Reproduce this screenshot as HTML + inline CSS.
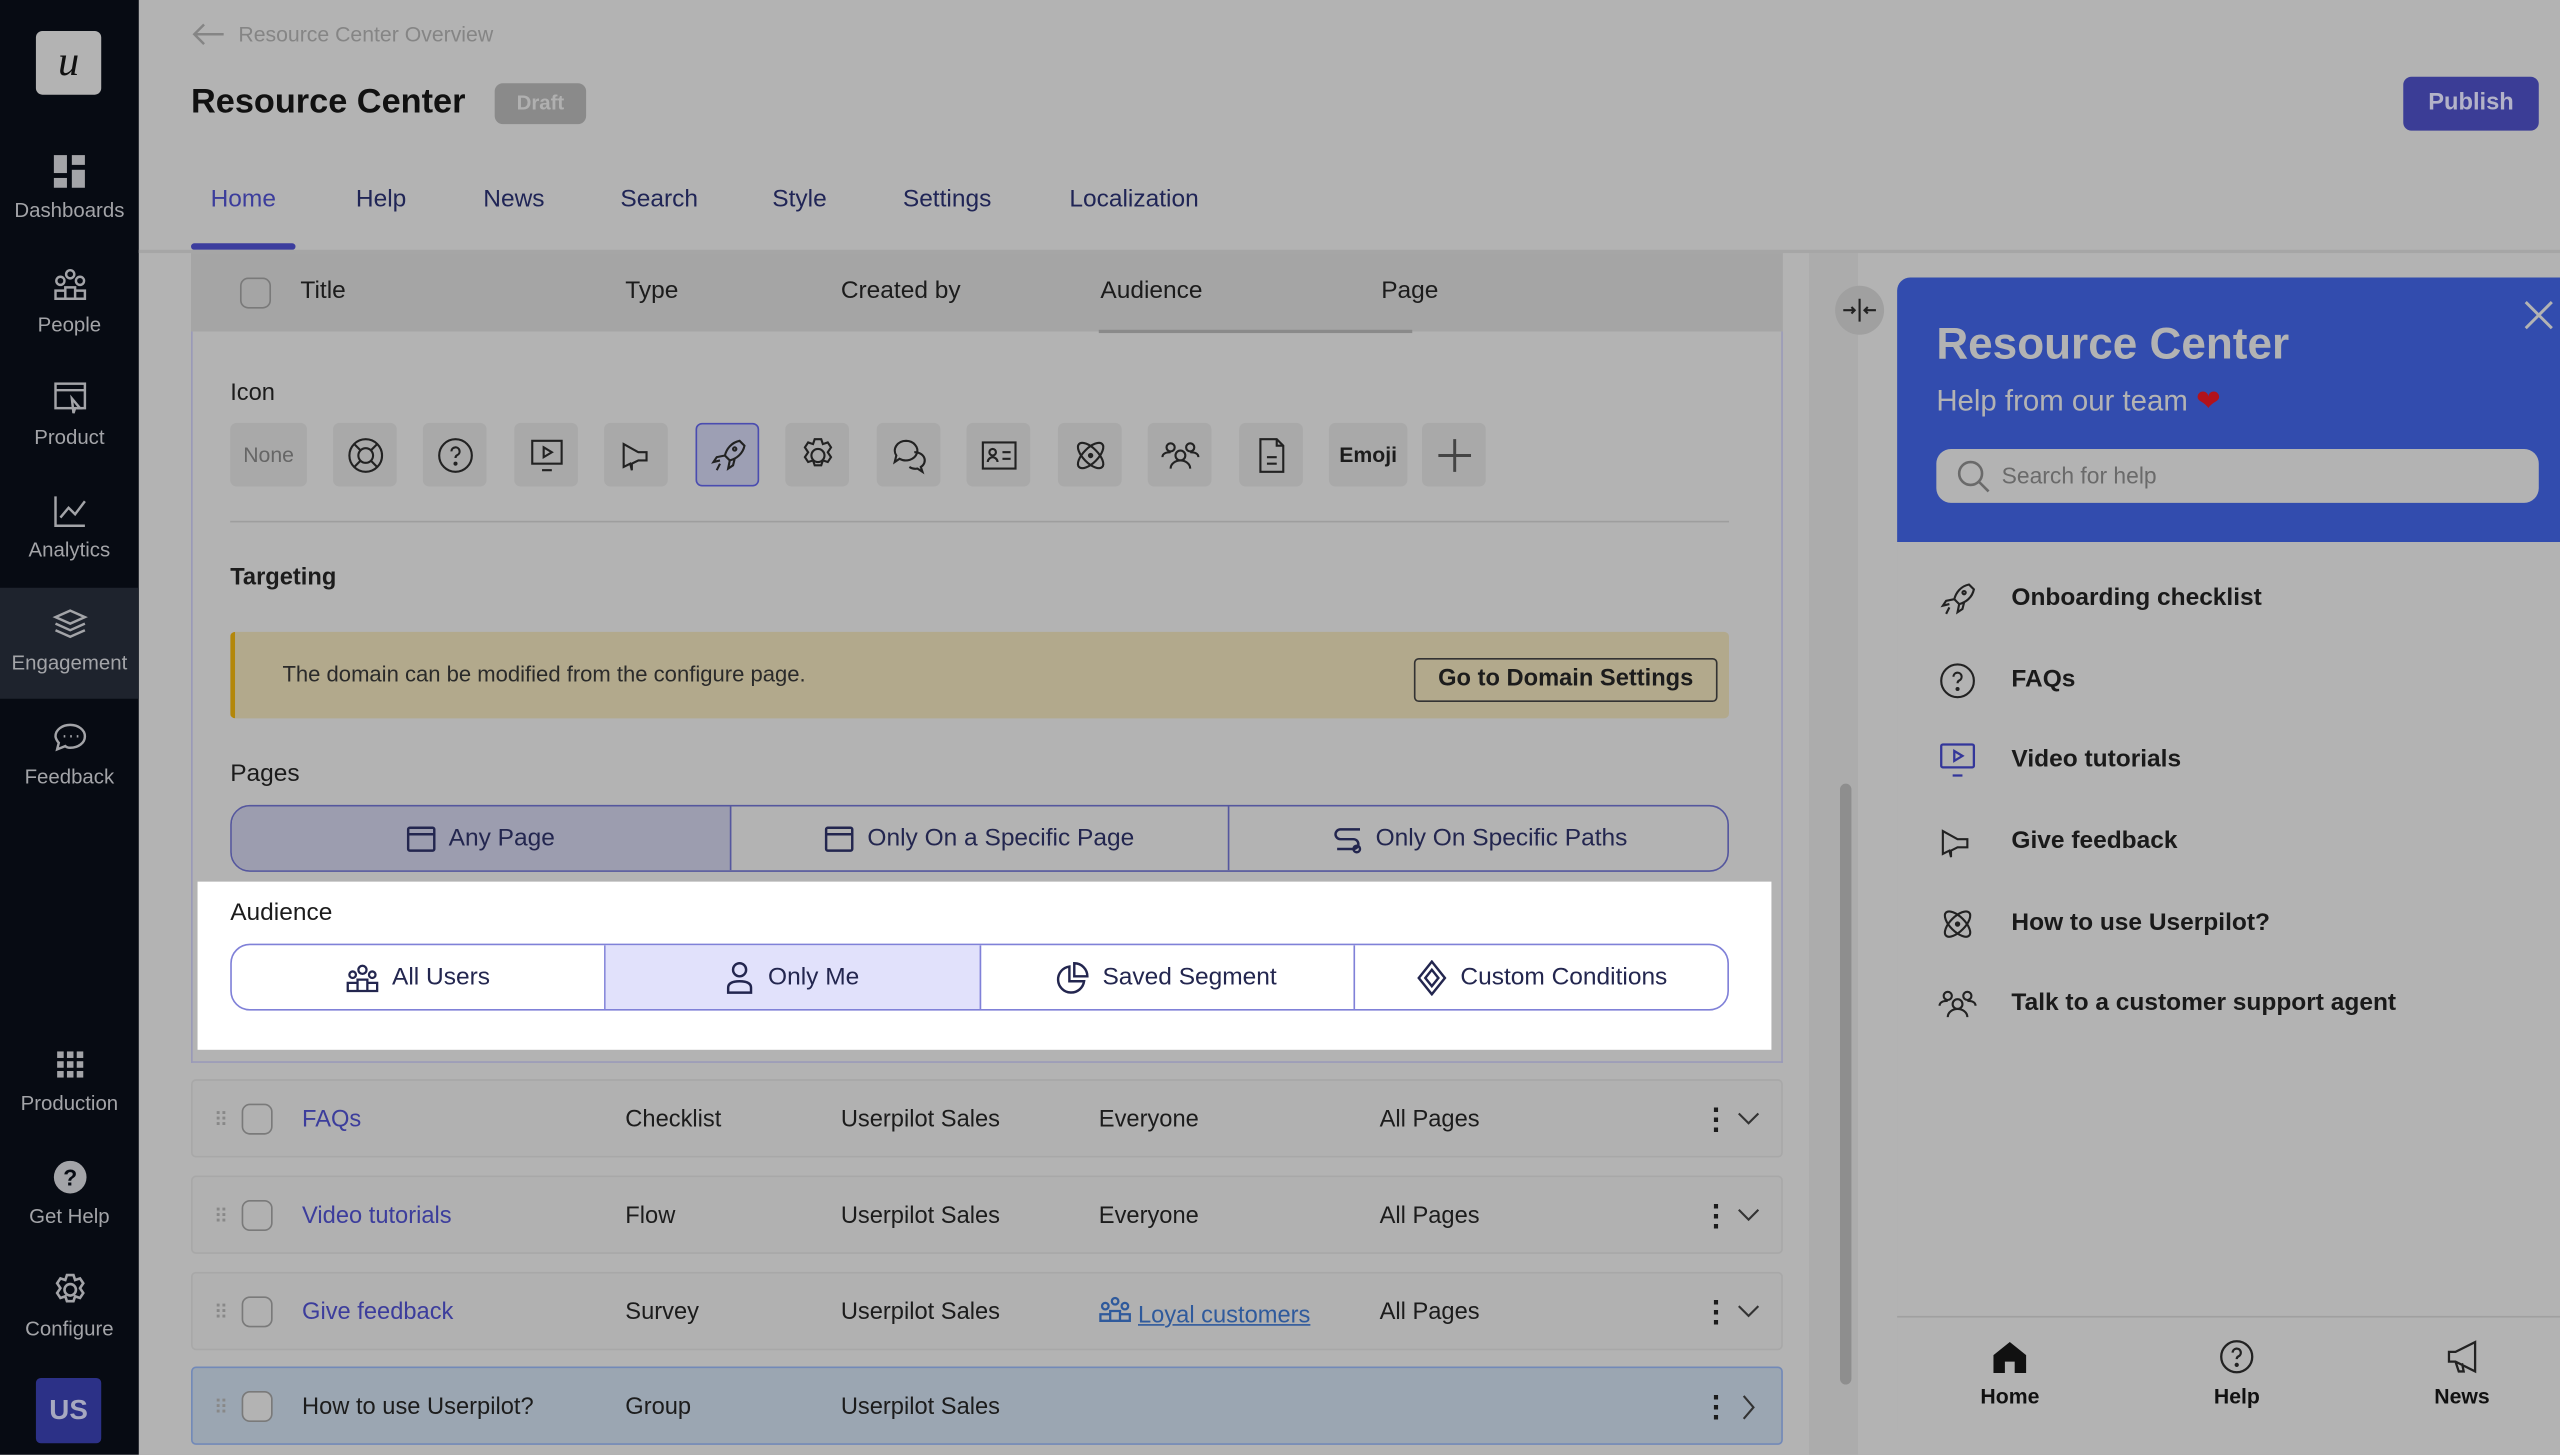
<!DOCTYPE html>
<html><head><meta charset="utf-8"><style>
*{box-sizing:border-box;margin:0;padding:0}
html,body{width:2560px;height:1455px;overflow:hidden;background:#b3b3b3}
#w{position:absolute;left:0;top:0;width:1568px;height:891px;transform:scale(1.632653);transform-origin:0 0;font-family:"Liberation Sans",sans-serif;color:#1c1c1c;background:#b3b3b3}
.a{position:absolute}
.sb{left:0;top:0;width:85px;height:891px;background:#070b13}
.ni{position:absolute;left:0;width:85px;text-align:center;color:#a3a4a8;font-size:12.5px}
.ni svg{display:block;margin:0 auto 6px}
.t{position:absolute;white-space:nowrap;transform:translateY(-50%)}
.ib{position:absolute;top:259px;width:39px;height:39px;background:#a9a9a9;border-radius:4px;display:flex;align-items:center;justify-content:center}
.seg{position:absolute;display:flex;border-radius:12px;overflow:hidden}
.seg div{flex:1;display:flex;align-items:center;justify-content:center;gap:8px;font-size:15px}
.row{position:absolute;left:117px;width:975px;height:48px;border:1px solid #a8a8a8;border-radius:3px;background:#b1b1b1}
.row .t{top:24px;font-size:14.5px}
.row .ch{position:absolute;left:946px;top:18px}
.cb{position:absolute;width:19px;height:19px;border:1.5px solid #7a7a7a;border-radius:5px}
.li{position:absolute;left:1187px;font-weight:bold;font-size:15px;color:#1a1a1a}
</style></head><body><div id="w">
<div class="a sb"></div>
<div class="a" style="left:22px;top:19px;width:40px;height:39px;background:#b3b3b3;border-radius:4px;font:italic 26px 'Liberation Serif',serif;text-align:center;line-height:37px;color:#111">u</div>
<div class="ni" style="top:94px"><svg width="22" height="22" viewBox="0 0 22 22" fill="#a3a4a8"><rect x="1" y="1" width="8" height="11"/><rect x="12" y="1" width="8" height="6"/><rect x="1" y="15" width="8" height="6"/><rect x="12" y="10" width="8" height="11"/></svg>Dashboards</div>
<div class="ni" style="top:164px"><svg width="22" height="22" viewBox="0 0 22 22" fill="none" stroke="#a3a4a8" stroke-width="1.5"><circle cx="11" cy="4" r="2.5"/><circle cx="5" cy="8" r="2.5"/><circle cx="17" cy="8" r="2.5"/><path d="M2 19v-5h6v5zM14 19v-5h6v5zM8 19v-7h6v7z"/></svg>People</div>
<div class="ni" style="top:233px"><svg width="22" height="22" viewBox="0 0 22 22" fill="none" stroke="#a3a4a8" stroke-width="1.5"><rect x="2" y="2" width="18" height="15"/><path d="M2 6h18M12 11l5 6-3 0-1 3z"/></svg>Product</div>
<div class="ni" style="top:302px"><svg width="22" height="22" viewBox="0 0 22 22" fill="none" stroke="#a3a4a8" stroke-width="1.5"><path d="M2 2v18h18M5 15l5-6 4 4 6-8"/></svg>Analytics</div>
<div class="a" style="left:0;top:360px;width:85px;height:68px;background:#1e232d"></div>
<div class="ni" style="top:371px"><svg width="22" height="22" viewBox="0 0 22 22" fill="none" stroke="#a3a4a8" stroke-width="1.5"><path d="M11 3l9 4-9 4-9-4zM2 11l9 4 9-4M2 15l9 4 9-4"/></svg>Engagement</div>
<div class="ni" style="top:441px"><svg width="22" height="22" viewBox="0 0 22 22" fill="none" stroke="#a3a4a8" stroke-width="1.5"><path d="M11 3c5 0 9 3 9 7s-4 7-9 7c-1 0-2 0-3-1l-5 2 1-4c-1-1-2-3-2-4 0-4 4-7 9-7z"/><path d="M7 10h1M11 10h1M15 10h1"/></svg>Feedback</div>
<div class="ni" style="top:641px"><svg width="22" height="22" viewBox="0 0 22 22" fill="#a3a4a8"><rect x="3" y="3" width="4" height="4"/><rect x="9" y="3" width="4" height="4"/><rect x="15" y="3" width="4" height="4"/><rect x="3" y="9" width="4" height="4"/><rect x="9" y="9" width="4" height="4"/><rect x="15" y="9" width="4" height="4"/><rect x="3" y="15" width="4" height="4"/><rect x="9" y="15" width="4" height="4"/><rect x="15" y="15" width="4" height="4"/></svg>Production</div>
<div class="ni" style="top:710px"><svg width="22" height="22" viewBox="0 0 22 22"><circle cx="11" cy="11" r="10" fill="#a3a4a8"/><text x="11" y="16" text-anchor="middle" font-size="14" font-weight="bold" fill="#070b13" font-family="Liberation Sans">?</text></svg>Get Help</div>
<div class="ni" style="top:779px"><svg width="22" height="22" viewBox="0 0 22 22" fill="none" stroke="#a3a4a8" stroke-width="1.6"><circle cx="11" cy="11" r="3.5"/><path d="M9 2h4l1 3 3-1 2 3-2 3 2 3-2 3-3-1-1 3H9l-1-3-3 1-2-3 2-3-2-3 2-3 3 1z"/></svg>Configure</div>
<div class="a" style="left:22px;top:844px;width:40px;height:40px;background:#2c3187;border-radius:3px;color:#a7a9c0;font-weight:bold;font-size:17px;text-align:center;line-height:40px">US</div>

<svg class="a" style="left:117px;top:13px" width="22" height="16" viewBox="0 0 22 16" fill="none" stroke="#858585" stroke-width="1.5"><path d="M20 8H2M8 2L2 8l6 6"/></svg>
<div class="t" style="left:146px;top:21px;font-size:13px;color:#858585">Resource Center Overview</div>
<div class="t" style="left:117px;top:63px;font-size:21px;font-weight:bold;color:#111">Resource Center</div>
<div class="a" style="left:303px;top:51px;width:56px;height:25px;background:#8a8a8a;border-radius:5px;color:#b0b0b0;font-size:12.5px;font-weight:bold;text-align:center;line-height:25px">Draft</div>
<div class="a" style="left:1472px;top:47px;width:83px;height:33px;background:#3b3d96;border-radius:5px;color:#b3b3c8;font-size:14.5px;font-weight:bold;text-align:center;line-height:33px">Publish</div>
<div class="t" style="left:129px;top:122px;font-size:15px;color:#3c3d9c">Home</div>
<div class="t" style="left:218px;top:122px;font-size:15px;color:#202556">Help</div>
<div class="t" style="left:296px;top:122px;font-size:15px;color:#202556">News</div>
<div class="t" style="left:380px;top:122px;font-size:15px;color:#202556">Search</div>
<div class="t" style="left:473px;top:122px;font-size:15px;color:#202556">Style</div>
<div class="t" style="left:553px;top:122px;font-size:15px;color:#202556">Settings</div>
<div class="t" style="left:655px;top:122px;font-size:15px;color:#202556">Localization</div>
<div class="a" style="left:117px;top:149px;width:64px;height:4px;background:#3c3d9e;border-radius:2px"></div>
<div class="a" style="left:85px;top:153px;width:1483px;height:2px;background:#a6a6a6"></div>

<div class="a" style="left:117px;top:155px;width:975px;height:48px;background:#a5a5a5"></div>
<div class="cb" style="left:147px;top:170px"></div>
<div class="t" style="left:184px;top:178px;font-size:15px">Title</div>
<div class="t" style="left:383px;top:178px;font-size:15px">Type</div>
<div class="t" style="left:515px;top:178px;font-size:15px">Created by</div>
<div class="t" style="left:674px;top:178px;font-size:15px">Audience</div>
<div class="t" style="left:846px;top:178px;font-size:15px">Page</div>
<div class="a" style="left:673px;top:202px;width:192px;height:2px;background:#8a8a8a"></div>

<div class="a" style="left:117px;top:203px;width:975px;height:448px;border:1px solid #9a9ab8;border-top:none"></div>
<div class="t" style="left:141px;top:241px;font-size:14.5px">Icon</div>
<div class="ib" style="left:141px;width:47px;font-size:13px;color:#666">None</div>
<div class="ib" style="left:204px"><svg width="24" height="24" fill="none" stroke="#222" stroke-width="1.3"><circle cx="12" cy="12" r="10"/><circle cx="12" cy="12" r="4.5"/><path d="M5 5l4 4M19 5l-4 4M5 19l4-4M19 19l-4-4"/></svg></div>
<div class="ib" style="left:259px"><svg width="24" height="24" fill="none" stroke="#222" stroke-width="1.3"><circle cx="12" cy="12" r="10"/><path d="M9.5 9.5a2.5 2.5 0 1 1 3.5 2.3c-.8.4-1 1-1 1.7"/><circle cx="12" cy="17" r=".6" fill="#222"/></svg></div>
<div class="ib" style="left:315px"><svg width="24" height="24" fill="none" stroke="#222" stroke-width="1.3"><rect x="3" y="3" width="18" height="14"/><path d="M10 7l5 3-5 3zM9 21h6"/></svg></div>
<div class="ib" style="left:370px"><svg width="24" height="24" fill="none" stroke="#222" stroke-width="1.3"><path d="M4 5l9 5h5v5h-5l-4 2v4l-1-4-4 2z"/></svg></div>
<div class="ib" style="left:426px;background:#9d9fb4;border:1.5px solid #4a4cb0"><svg width="24" height="24" fill="none" stroke="#222" stroke-width="1.3"><path d="M19 3c-5 1-8 5-9 9l3 3c4-1 8-4 9-9zM10 12l-5 1-2 3 4-1M13 15l-1 5 3-2 1-4M7 17l-2 4"/><circle cx="16" cy="8" r="1"/></svg></div>
<div class="ib" style="left:481px"><svg width="24" height="24" fill="none" stroke="#222" stroke-width="1.3"><circle cx="12" cy="12" r="4"/><path d="M10 2h4l1 3 3-1 2 3-2 3 2 3-2 3-3-1-1 3h-4l-1-3-3 1-2-3 2-3-2-3 2-3 3 1z"/></svg></div>
<div class="ib" style="left:537px"><svg width="24" height="24" fill="none" stroke="#222" stroke-width="1.3"><path d="M10 3a7 6 0 1 1-4 11l-3 2 1-4a7 6 0 0 1 6-9z"/><path d="M15 10a6 5 0 0 1 4 9l1 3-3-2a6 5 0 0 1-5-1"/></svg></div>
<div class="ib" style="left:592px"><svg width="24" height="24" fill="none" stroke="#222" stroke-width="1.3"><rect x="2" y="4" width="20" height="16"/><circle cx="8" cy="10" r="2"/><path d="M5 16c0-2 2-3 3-3s3 1 3 3M14 10h5M14 14h5"/></svg></div>
<div class="ib" style="left:648px"><svg width="24" height="24" fill="none" stroke="#222" stroke-width="1.3"><ellipse cx="12" cy="12" rx="10" ry="4.5" transform="rotate(45 12 12)"/><ellipse cx="12" cy="12" rx="10" ry="4.5" transform="rotate(-45 12 12)"/><circle cx="12" cy="12" r="1" fill="#222"/></svg></div>
<div class="ib" style="left:703px"><svg width="24" height="24" fill="none" stroke="#222" stroke-width="1.3"><circle cx="12" cy="12" r="3"/><path d="M6 20c0-3 3-5 6-5s6 2 6 5"/><circle cx="6" cy="7" r="2.5"/><circle cx="18" cy="7" r="2.5"/><path d="M1 13c0-2 2-3 5-3M23 13c0-2-2-3-5-3"/></svg></div>
<div class="ib" style="left:759px"><svg width="24" height="24" fill="none" stroke="#222" stroke-width="1.3"><path d="M5 2h10l4 4v16H5zM15 2v4h4M9 13h6M9 17h6"/></svg></div>
<div class="ib" style="left:814px;width:48px;font-size:13px;font-weight:bold">Emoji</div>
<div class="ib" style="left:871px"><svg width="24" height="24" stroke="#444" stroke-width="1.8"><path d="M12 2v20M2 12h20"/></svg></div>
<div class="a" style="left:141px;top:319px;width:918px;height:1px;background:#9e9e9e"></div>
<div class="t" style="left:141px;top:354px;font-size:14.5px;font-weight:bold">Targeting</div>
<div class="a" style="left:141px;top:387px;width:918px;height:53px;background:#b2a98c;border-left:3px solid #b3870a;border-radius:3px"></div>
<div class="t" style="left:173px;top:413px;font-size:13.5px;color:#2a2a2a">The domain can be modified from the configure page.</div>
<div class="a" style="left:866px;top:403px;width:186px;height:27px;border:1.3px solid #333;border-radius:3px;font-size:14.5px;font-weight:bold;text-align:center;line-height:25px">Go to Domain Settings</div>
<div class="t" style="left:141px;top:474px;font-size:15px">Pages</div>
<div class="seg" style="left:141px;top:493px;width:918px;height:41px;border:1.3px solid #55579e">
<div style="background:#9c9daf;border-right:1px solid #55579e;color:#23264f"><svg width="18" height="16" fill="none" stroke="#23264f" stroke-width="1.5"><rect x="1" y="1" width="16" height="14" rx="1"/><path d="M1 5h16"/></svg>Any Page</div>
<div style="border-right:1px solid #55579e;color:#23264f"><svg width="18" height="16" fill="none" stroke="#23264f" stroke-width="1.5"><rect x="1" y="1" width="16" height="14" rx="1"/><path d="M1 5h16"/></svg>Only On a Specific Page</div>
<div style="color:#23264f"><svg width="20" height="18" fill="none" stroke="#23264f" stroke-width="1.5"><path d="M18 3H6a3 3 0 0 0 0 6h8a3 3 0 0 1 0 6H4"/><circle cx="16" cy="15" r="2"/></svg>Only On Specific Paths</div></div>

<div class="a" style="left:121px;top:540px;width:964px;height:103px;background:#fff"></div>
<div class="t" style="left:141px;top:559px;font-size:15px">Audience</div>
<div class="seg" style="left:141px;top:578px;width:918px;height:41px;border:1.3px solid #8081d8">
<div style="border-right:1px solid #8081d8;color:#23264f"><svg width="20" height="18" fill="none" stroke="#23264f" stroke-width="1.4"><circle cx="10" cy="4" r="2.5"/><circle cx="4" cy="7" r="2"/><circle cx="16" cy="7" r="2"/><path d="M1 17v-5h6v5zM13 17v-5h6v5zM7 17v-7h6v7z"/></svg>All Users</div>
<div style="background:#e1e1fb;border-right:1px solid #8081d8;color:#23264f"><svg width="18" height="20" fill="none" stroke="#23264f" stroke-width="1.5"><circle cx="9" cy="5" r="4"/><path d="M2 19v-3c0-3 3-4 7-4s7 1 7 4v3z"/></svg>Only Me</div>
<div style="border-right:1px solid #8081d8;color:#23264f"><svg width="20" height="20" fill="none" stroke="#23264f" stroke-width="1.5"><path d="M8 3a8 8 0 1 0 9 9h-9z"/><path d="M11 1v8h8a8 8 0 0 0-8-8z"/></svg>Saved Segment</div>
<div style="color:#23264f"><svg width="20" height="22" fill="none" stroke="#23264f" stroke-width="1.5"><path d="M10 1l8 10-8 10-8-10z"/><path d="M10 6l4 5-4 5-4-5z"/></svg>Custom Conditions</div></div>

<div class="row" style="top:661px"><div class="t" style="left:13px;color:#888;font-size:12px;letter-spacing:-1px">⠿</div><div class="cb" style="left:30px;top:14px"></div><div class="t" style="left:67px;color:#3c3d9c">FAQs</div><div class="t" style="left:265px">Checklist</div><div class="t" style="left:397px">Userpilot Sales</div><div class="t" style="left:555px">Everyone</div><div class="t" style="left:727px">All Pages</div><div class="t" style="left:924px;font-size:18px;font-weight:bold">⋮</div><svg class="ch" width="14" height="10" fill="none" stroke="#333" stroke-width="1.3"><path d="M1 2l6 6 6-6"/></svg></div>
<div class="row" style="top:720px"><div class="t" style="left:13px;color:#888;font-size:12px;letter-spacing:-1px">⠿</div><div class="cb" style="left:30px;top:14px"></div><div class="t" style="left:67px;color:#3c3d9c">Video tutorials</div><div class="t" style="left:265px">Flow</div><div class="t" style="left:397px">Userpilot Sales</div><div class="t" style="left:555px">Everyone</div><div class="t" style="left:727px">All Pages</div><div class="t" style="left:924px;font-size:18px;font-weight:bold">⋮</div><svg class="ch" width="14" height="10" fill="none" stroke="#333" stroke-width="1.3"><path d="M1 2l6 6 6-6"/></svg></div>
<div class="row" style="top:779px"><div class="t" style="left:13px;color:#888;font-size:12px;letter-spacing:-1px">⠿</div><div class="cb" style="left:30px;top:14px"></div><div class="t" style="left:67px;color:#3c3d9c">Give feedback</div><div class="t" style="left:265px">Survey</div><div class="t" style="left:397px">Userpilot Sales</div><div class="t" style="left:555px;color:#2f5a9c"><svg width="20" height="16" fill="none" stroke="#2f5a9c" stroke-width="1.4"><circle cx="10" cy="3" r="2"/><circle cx="4" cy="6" r="2"/><circle cx="16" cy="6" r="2"/><path d="M1 15v-4h6v4zM13 15v-4h6v4zM7 15v-6h6v6z"/></svg> <u>Loyal customers</u></div><div class="t" style="left:727px">All Pages</div><div class="t" style="left:924px;font-size:18px;font-weight:bold">⋮</div><svg class="ch" width="14" height="10" fill="none" stroke="#333" stroke-width="1.3"><path d="M1 2l6 6 6-6"/></svg></div>
<div class="row" style="top:837px;background:#9ba6b2;border-color:#7289b8"><div class="t" style="left:13px;color:#888;font-size:12px;letter-spacing:-1px">⠿</div><div class="cb" style="left:30px;top:14px;background:#b3b3b3"></div><div class="t" style="left:67px">How to use Userpilot?</div><div class="t" style="left:265px">Group</div><div class="t" style="left:397px">Userpilot Sales</div><div class="t" style="left:924px;font-size:18px;font-weight:bold">⋮</div><svg class="a" style="left:949px;top:16px" width="8" height="16" fill="none" stroke="#333" stroke-width="1.3"><path d="M1 1l6 7-6 7"/></svg></div>

<div class="a" style="left:1108px;top:155px;width:30px;height:736px;background:#acacac"></div>
<div class="a" style="left:1127px;top:480px;width:7px;height:368px;background:#8e8e8e;border-radius:4px"></div>
<div class="a" style="left:1124px;top:175px;width:30px;height:30px;background:#a0a0a0;border-radius:50%"></div>
<svg class="a" style="left:1128px;top:182px" width="22" height="16" fill="none" stroke="#222" stroke-width="1.3"><path d="M11 1v14M1 8h7M6 6l2 2-2 2M21 8h-7M16 6l-2 2 2 2"/></svg>

<div class="a" style="left:1162px;top:170px;width:406px;height:706px;background:#b3b3b3;border-radius:8px 0 0 0"></div>
<div class="a" style="left:1162px;top:170px;width:406px;height:162px;background:#324cae;border-radius:8px 0 0 0"></div>
<div class="t" style="left:1186px;top:211px;font-size:27px;font-weight:bold;color:#b3b3b3">Resource Center</div>
<div class="t" style="left:1186px;top:246px;font-size:18px;color:#b3b3b3">Help from our team <span style="color:#b2121b">❤</span></div>
<svg class="a" style="left:1545px;top:183px" width="20" height="20" stroke="#b3b3b3" stroke-width="1.8"><path d="M2 2l16 16M18 2L2 18"/></svg>
<div class="a" style="left:1186px;top:275px;width:369px;height:33px;background:#b3b3b3;border-radius:9px"></div>
<svg class="a" style="left:1198px;top:281px" width="22" height="22" fill="none" stroke="#6a6a6a" stroke-width="1.6"><circle cx="9" cy="9" r="7"/><path d="M14 14l6 6"/></svg>
<div class="t" style="left:1226px;top:291px;font-size:14px;color:#6a6a6a">Search for help</div>
<svg class="a" style="left:1187px;top:355px" width="24" height="24" fill="none" stroke="#222" stroke-width="1.3"><path d="M19 3c-5 1-8 5-9 9l3 3c4-1 8-4 9-9zM10 12l-5 1-2 3 4-1M13 15l-1 5 3-2 1-4M7 17l-2 4"/><circle cx="16" cy="8" r="1"/></svg>
<div class="t li" style="left:1232px;top:366px">Onboarding checklist</div>
<svg class="a" style="left:1187px;top:405px" width="24" height="24" fill="none" stroke="#222" stroke-width="1.3"><circle cx="12" cy="12" r="10"/><path d="M9.5 9.5a2.5 2.5 0 1 1 3.5 2.3c-.8.4-1 1-1 1.7"/><circle cx="12" cy="17" r=".6" fill="#222"/></svg>
<div class="t li" style="left:1232px;top:416px">FAQs</div>
<svg class="a" style="left:1187px;top:454px" width="24" height="24" fill="none" stroke="#33369a" stroke-width="1.4"><rect x="2" y="2" width="20" height="14" rx="1"/><path d="M10 6l5 3-5 3zM9 21h6"/></svg>
<div class="t li" style="left:1232px;top:465px">Video tutorials</div>
<svg class="a" style="left:1187px;top:504px" width="24" height="24" fill="none" stroke="#222" stroke-width="1.3"><path d="M3 5l9 5h6v5h-6l-4 2v4l-1-4-4 2z"/></svg>
<div class="t li" style="left:1232px;top:515px">Give feedback</div>
<svg class="a" style="left:1187px;top:554px" width="24" height="24" fill="none" stroke="#222" stroke-width="1.3"><ellipse cx="12" cy="12" rx="10" ry="4.5" transform="rotate(45 12 12)"/><ellipse cx="12" cy="12" rx="10" ry="4.5" transform="rotate(-45 12 12)"/><circle cx="12" cy="12" r="1" fill="#222"/></svg>
<div class="t li" style="left:1232px;top:565px">How to use Userpilot?</div>
<svg class="a" style="left:1187px;top:603px" width="24" height="24" fill="none" stroke="#222" stroke-width="1.3"><circle cx="12" cy="12" r="3"/><path d="M6 20c0-3 3-5 6-5s6 2 6 5"/><circle cx="6" cy="7" r="2.5"/><circle cx="18" cy="7" r="2.5"/><path d="M1 13c0-2 2-3 5-3M23 13c0-2-2-3-5-3"/></svg>
<div class="t li" style="left:1232px;top:614px">Talk to a customer support agent</div>
<div class="a" style="left:1162px;top:806px;width:406px;height:1px;background:#a0a0a0"></div>
<svg class="a" style="left:1220px;top:820px" width="22" height="22" fill="#111"><path d="M11 2L1 10v11h7v-7h6v7h7V10z"/></svg>
<div class="t" style="left:1213px;top:855px;font-size:13px;font-weight:bold;color:#111">Home</div>
<svg class="a" style="left:1359px;top:820px" width="22" height="22" fill="none" stroke="#222" stroke-width="1.4"><circle cx="11" cy="11" r="9.5"/><path d="M8.5 8.5a2.5 2.5 0 1 1 3.5 2.3c-.8.4-1 1-1 1.7"/><circle cx="11" cy="16" r=".6" fill="#222"/></svg>
<div class="t" style="left:1356px;top:855px;font-size:13px;font-weight:bold;color:#111">Help</div>
<svg class="a" style="left:1498px;top:820px" width="22" height="22" fill="none" stroke="#222" stroke-width="1.4"><path d="M2 8h4l12-6v18L6 14H2zM6 14l2 6h3l-1-5"/></svg>
<div class="t" style="left:1491px;top:855px;font-size:13px;font-weight:bold;color:#111">News</div>
</div></body></html>
